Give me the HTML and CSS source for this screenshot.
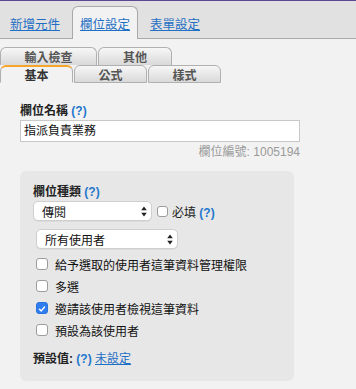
FILE: index.html
```html
<!DOCTYPE html>
<html lang="zh-Hant">
<head>
<meta charset="utf-8">
<link rel="stylesheet" href="styles.css">
</head>
<body>
<header class="topbar">
  <div class="ttab"><a href="#">新增元件</a></div>
  <div class="ttab active"><a href="#">欄位設定</a></div>
  <div class="ttab"><a href="#">表單設定</a></div>
</header>

<nav class="subtabs">
  <div class="strow back">
    <span class="stab wide">輸入檢查</span>
    <span class="stab mid">其他</span>
  </div>
  <div class="strow front">
    <span class="stab cur">基本</span>
    <span class="stab">公式</span>
    <span class="stab">樣式</span>
  </div>
</nav>

<main class="content">
  <div class="label">欄位名稱 <span class="help">(?)</span></div>
  <div class="textbox">指派負責業務</div>
  <div class="fieldid">欄位編號: 1005194</div>

  <section class="panel">
    <div class="label">欄位種類 <span class="help">(?)</span></div>
    <div class="typerow">
      <div class="select sel-type"><span>傳閱</span><svg class="arrows" width="6" height="11" viewBox="0 0 6 11"><path d="M3 0.5 L5.8 4.3 H0.2 Z M3 10.5 L5.8 6.7 H0.2 Z" fill="#222"/></svg></div>
      <span class="cb req"></span>
      <span class="reqtext">必填 <span class="help">(?)</span></span>
    </div>
    <div class="select sel-users"><span>所有使用者</span><svg class="arrows" width="6" height="11" viewBox="0 0 6 11"><path d="M3 0.5 L5.8 4.3 H0.2 Z M3 10.5 L5.8 6.7 H0.2 Z" fill="#222"/></svg></div>
    <ul class="opts">
      <li><span class="cb"></span>給予選取的使用者這筆資料管理權限</li>
      <li><span class="cb"></span>多選</li>
      <li><span class="cb on"><svg width="12" height="12" viewBox="0 0 12 12"><path d="M3 6.2 L5.1 8.3 L9 3.6" fill="none" stroke="#fff" stroke-width="1.7" stroke-linecap="round" stroke-linejoin="round"/></svg></span>邀請該使用者檢視這筆資料</li>
      <li><span class="cb"></span>預設為該使用者</li>
    </ul>
    <div class="default">預設值: <span class="help">(?)</span> <a href="#">未設定</a></div>
  </section>
</main>
</body>
</html>
```

FILE: styles.css
```css
* { box-sizing: border-box; }
html, body { margin: 0; padding: 0; }
body {
  width: 356px;
  height: 389px;
  overflow: hidden;
  background: #f2f2f2;
  font-family: "Liberation Sans", "Noto Sans CJK TC", sans-serif;
  font-size: 12px;
  color: #222;
}

/* top tabs */
.topbar {
  display: flex;
  align-items: flex-end;
  gap: 4px;
  height: 39px;
  padding-left: 2px;
  background: #e1e1e1;
  border-top: 1px solid #5a4890;
  border-bottom: 1px solid #a9a9a9;
}
.ttab {
  height: 33px;
  padding: 0 7px;
  border: 1px solid transparent;
  border-bottom: 0;
  display: flex;
  align-items: center;
  margin-bottom: -1px;
  font-size: 12.5px;
}
.ttab a { color: #1f6fc4; text-decoration: underline; }
.ttab.active {
  background: #f2f2f2;
  border-color: #a9a9a9;
  border-radius: 6px 6px 0 0;
}

/* sub tabs */
.subtabs { padding-top: 8px; }
.strow { display: flex; gap: 1px; }
.stab {
  width: 73px;
  display: flex;
  justify-content: center;
  align-items: center;
  font-weight: bold;
  color: #555;
  border: 1px solid #b0b0b0;
  border-radius: 6px 6px 0 0;
  background: linear-gradient(#f7f7f7, #d9d9d9);
}
.back .stab { height: 18px; border-bottom: 0; }
.stab.wide { width: 97px; }
.stab.mid { width: 74px; }
.front .stab { height: 18px; }
.front .stab.cur {
  background: #f2f2f2;
  border-top: 2px solid #f4a52a;
  border-bottom-color: #f2f2f2;
  color: #333;
}

/* content */
.content { padding-left: 20px; width: 300px; }
.label {
  margin-top: 20px;
  line-height: 16px;
  font-weight: bold;
  color: #222;
}
.help { color: #2277cc; font-weight: bold; }
.textbox {
  margin-top: 1px;
  height: 22px;
  width: 280px;
  background: #fff;
  border: 1px solid #c9c9c9;
  padding-left: 3px;
  line-height: 20px;
  color: #111;
}
.fieldid {
  margin-top: 2px;
  width: 280px;
  text-align: right;
  line-height: 16px;
  color: #9a9a9a;
}

.panel {
  margin-top: 11px;
  width: 274px;
  background: #e7e7e7;
  border-radius: 6px;
  padding: 13px 13px 14px;
}
.panel .label { margin-top: 0; }
.typerow {
  margin-top: 1px;
  display: flex;
  align-items: center;
}
.select {
  display: flex;
  align-items: center;
  justify-content: space-between;
  background: #fff;
  border: 1px solid #cfcfcf;
  border-radius: 5px;
  padding: 0 4px 0 8px;
  color: #111;
  box-shadow: 0 1px 0 rgba(0,0,0,0.05);
}
.sel-type { width: 119px; height: 20px; }
.sel-users { width: 142px; height: 20px; margin: 8px 0 0 3px; }
.arrows { display: block; }
.cb {
  width: 12px;
  height: 12px;
  flex: none;
  border: 1px solid #9c9c9c;
  border-radius: 3px;
  background: #fff;
  display: inline-flex;
}
.cb.req { width: 11px; height: 11px; margin-left: 5px; }
.reqtext { margin-left: 4px; }
.cb.on { background: #2f7df0; border-color: #2b72dc; }
.opts {
  list-style: none;
  margin: 4px 0 0 0;
  padding: 0 0 0 3px;
}
.opts li {
  height: 22px;
  display: flex;
  align-items: center;
  gap: 7px;
  color: #111;
}
.default {
  margin-top: 10px;
  line-height: 16px;
  font-weight: bold;
}
.default a { color: #1f6fc4; font-weight: normal; text-decoration: underline; }
```
